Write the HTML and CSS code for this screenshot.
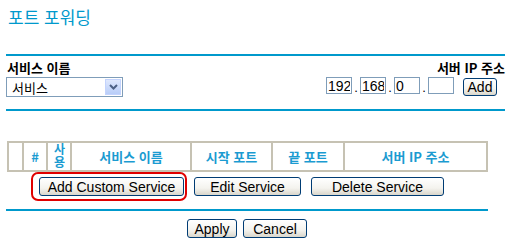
FILE: index.html
```html
<!DOCTYPE html>
<html lang="ko">
<head>
    <meta charset="UTF-8">
    <title>포트 포워딩</title>
    <link rel="stylesheet" href="styles.css">
</head>
<body>

<h1 class="title">포트 포워딩</h1>

<hr class="line">

<!-- 서비스 선택 영역 -->
<div class="service-row">
    <div class="service-left">
        <label class="field-label" for="svc">서비스 이름</label>
        <div class="select-box" id="svc">
            <span class="select-text">서비스</span>
            <span class="select-arrow">
                <svg width="9" height="6" viewBox="0 0 9 6"><path d="M1 1 L4.5 4.5 L8 1" fill="none" stroke="#4d6185" stroke-width="2"/></svg>
            </span>
        </div>
    </div>
    <div class="service-right">
        <span class="field-label">서버 IP 주소</span>
        <div class="ip-row">
            <input class="ip" type="text" value="192"><span class="dot">.</span>
            <input class="ip" type="text" value="168"><span class="dot">.</span>
            <input class="ip" type="text" value="0"><span class="dot">.</span>
            <input class="ip" type="text" value="">
            <button class="btn btn-add">Add</button>
        </div>
    </div>
</div>

<hr class="line">

<!-- 서비스 목록 -->
<div class="list-area">
    <table class="svc-table">
        <tr>
            <th class="c1"></th>
            <th class="c2">#</th>
            <th class="c3"><span class="vtext">사용</span></th>
            <th class="c4">서비스 이름</th>
            <th class="c5">시작 포트</th>
            <th class="c6">끝 포트</th>
            <th class="c7">서버 IP 주소</th>
        </tr>
    </table>

    <div class="action-row">
        <span class="mark"><button class="btn btn-wide">Add Custom Service</button></span>
        <button class="btn btn-edit">Edit Service</button>
        <button class="btn btn-del">Delete Service</button>
    </div>

    <hr class="line line-short">

    <div class="apply-row">
        <button class="btn btn-apply">Apply</button>
        <button class="btn btn-cancel">Cancel</button>
    </div>
</div>

</body>
</html>
```

FILE: styles.css
```css
body {
    margin: 0;
    padding: 0 7px 0 6px;
    font-family: "Liberation Sans", "Noto Sans CJK KR", sans-serif;
    background: #fff;
    color: #000;
}
.title {
    margin: 0 0 27px 2px;
    padding-top: 7px;
    font-size: 17px;
    line-height: 20px;
    font-weight: normal;
    color: #0099cc;
    font-family: "Noto Sans CJK KR", sans-serif;
}
.line {
    margin: 0;
    height: 2px;
    border: none;
    background: #0099cc;
}
.line-short {
    width: 482px;
    margin-top: 8px;
}
.service-row {
    display: flex;
    justify-content: space-between;
    padding-top: 4px;
    height: 49px;
}
.field-label {
    display: block;
    font-size: 13px;
    line-height: 16px;
    font-weight: bold;
    font-family: "Noto Sans CJK KR", "Liberation Sans", sans-serif;
    margin-left: 1px;
}
.select-box {
    margin-top: 1px;
    width: 115px;
    height: 18px;
    border: 1px solid #7f9db9;
    display: flex;
    justify-content: space-between;
    align-items: center;
}
.select-text {
    font-size: 13px;
    padding-left: 5px;
    font-family: "Noto Sans CJK KR", sans-serif;
}
.select-arrow {
    width: 16px;
    height: 16px;
    margin-right: 1px;
    background: linear-gradient(#dfe8fd, #b8cdf8);
    border: 1px solid #c3d3fd;
    box-sizing: border-box;
    display: flex;
    align-items: center;
    justify-content: center;
}
.service-right {
    display: flex;
    flex-direction: column;
    align-items: flex-end;
}
.ip-row {
    display: flex;
    align-items: flex-start;
    margin-top: 1px;
    margin-right: 8px;
}
.ip {
    width: 26px;
    height: 17px;
    box-sizing: border-box;
    border: 1px solid #7f9db9;
    padding: 0 1px;
    margin: 0;
    font-family: "Liberation Sans", sans-serif;
    font-size: 14px;
    line-height: 15px;
}
.dot {
    width: 8px;
    font-size: 13px;
    line-height: 17px;
    padding-top: 2px;
    text-align: center;
}
.btn {
    font-family: "Liberation Sans", sans-serif;
    font-size: 14px;
    height: 19px;
    padding: 0;
    border: 1px solid #003c74;
    border-radius: 3px;
    background: linear-gradient(#ffffff, #f4f3ee 60%, #d9d6cb);
    color: #000;
    line-height: 16px;
}
.btn-add {
    width: 34px;
    height: 18px;
    margin-left: 9px;
    margin-top: 1px;
}
.list-area {
    width: 482px;
}
.svc-table {
    margin-top: 30px;
    margin-left: 1px;
    width: 481px;
    border-collapse: collapse;
    border: 2px solid #c6c2b3;
}
.svc-table th {
    border: 2px solid #c6c2b3;
    height: 26px;
    padding: 0;
    font-size: 13px;
    line-height: 13px;
    color: #1b9bd1;
    font-family: "Noto Sans CJK KR", "Liberation Sans", sans-serif;
}
.vtext {
    display: inline-block;
    writing-mode: vertical-rl;
    text-orientation: upright;
    font-size: 12px;
    line-height: 14px;
    letter-spacing: 1px;
}
.c1 { width: 13px; }
.c2 { width: 22px; }
.c3 { width: 22px; }
.c4 { width: 118px; }
.c5 { width: 79px; }
.c6 { width: 70px; }
.action-row {
    display: flex;
    align-items: center;
    padding-left: 25px;
}
.mark {
    display: inline-block;
    border: 2px solid #e00000;
    border-radius: 7px;
    padding: 3px 1px 3px 6px;
}
.btn-wide { width: 145px; }
.btn-edit { width: 107px; margin-left: 7px; }
.btn-del { width: 133px; margin-left: 10px; }
.apply-row {
    display: flex;
    justify-content: center;
    gap: 6px;
    margin-top: 8px;
}
.btn-apply { width: 50px; }
.btn-cancel { width: 64px; }
```
